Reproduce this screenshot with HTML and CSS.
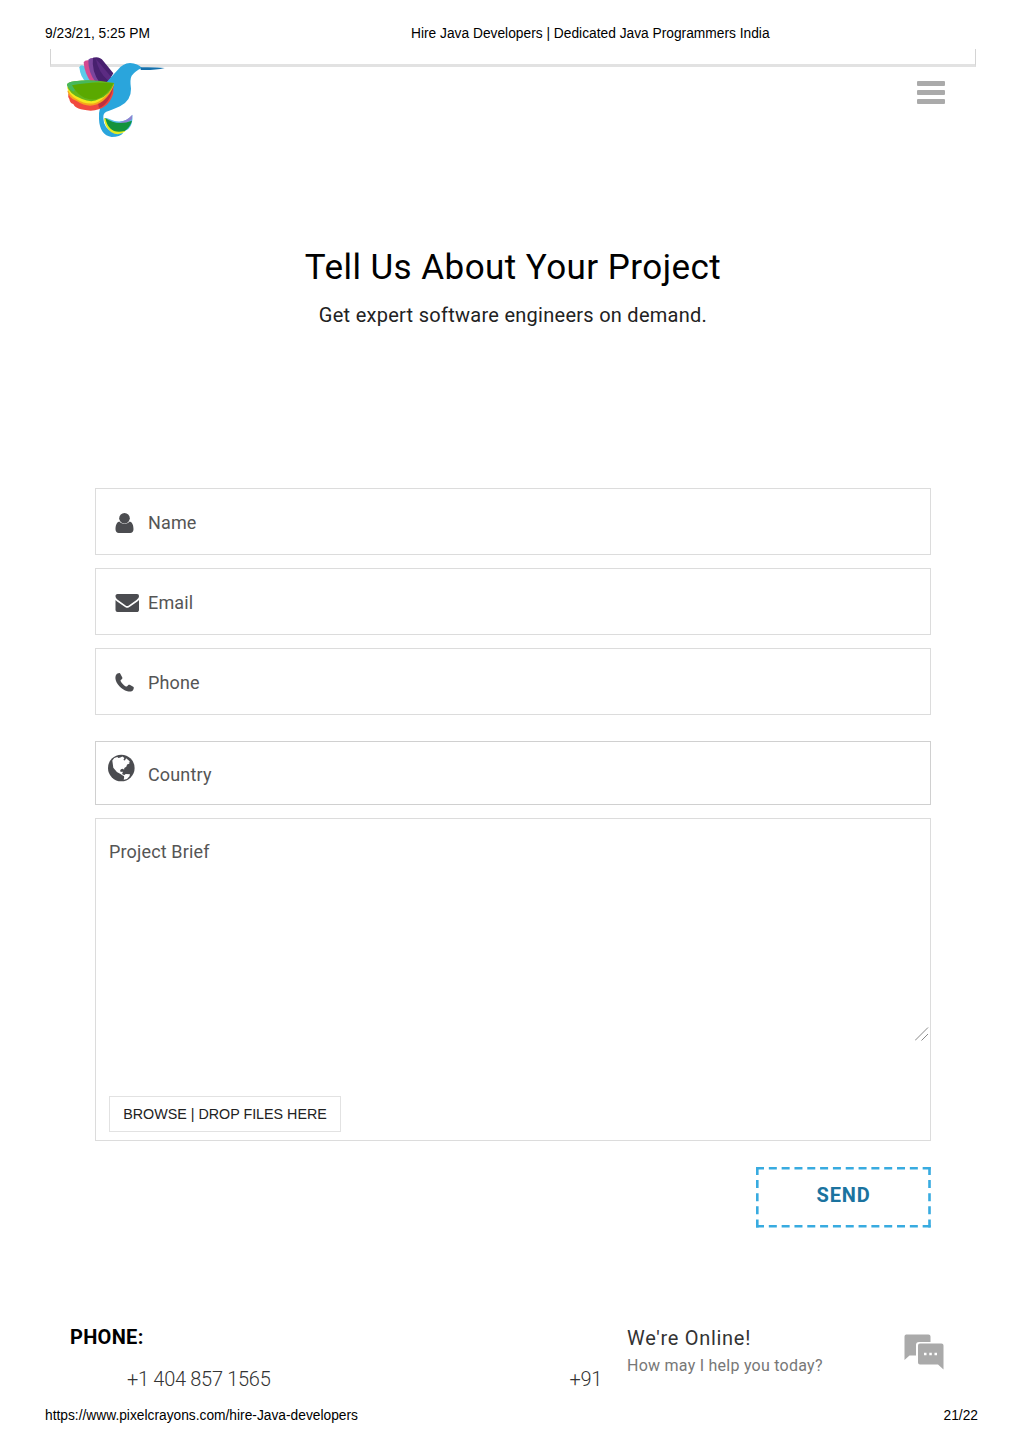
FILE: index.html
```html
<!DOCTYPE html>
<html lang="en">
<head>
    <meta charset="UTF-8">
    <meta name="viewport" content="width=device-width, initial-scale=1.0">
    <title>Hire Java Developers | Dedicated Java Programmers India</title>
    <link rel="stylesheet" href="styles.css">
</head>
<body>
    <div class="print-header">
        <span class="print-date">9/23/21, 5:25 PM</span>
        <span>Hire Java Developers | Dedicated Java Programmers India</span>
    </div>

    <div class="panel-edge"></div>
    <header class="site-header">
        <svg class="logo" width="110" height="92" viewBox="0 0 330 276">
            <path d="M58 52 Q61 42 73 48 L132 98 H80 Q61 83 58 52Z" fill="#5bcbea"/>
            <path d="M71 37 Q76 27 94 33 L142 98 H94 Q73 70 71 37Z" fill="#d44a91"/>
            <path d="M85 29 Q89 23 104 23 L155 75 L142 98 H108 Q84 67 85 29Z" fill="#7a459d"/>
            <path d="M99 23 Q119 18 130 33 L160 70 L143 98 H119 Q94 63 99 23Z" fill="#48206f"/>
            <path d="M108 27 L153 80 L146 93 Q115 68 108 27Z" fill="#5b2b82"/>
            <path d="M137 100 Q156 78 173 60 Q188 40 210 39 Q234 40 246 54 Q225 63 215 77 Q209 88 213 116 Q214 151 180 169 Q155 181 139 185 Q129 189 130 204 Q131 234 158 246 Q176 253 190 248 Q180 261 155 261 Q119 255 117 207 Q116 187 120 174 Z" fill="#2aa5dc"/>
            <path d="M242 52 Q286 51 314 54 Q286 61 242 60Z" fill="#1470ac"/>
            <path d="M25 132 Q23 141 28 147 Q30 160 40 162 Q45 179 92 182 Q145 181 160 130 L160 104Z" fill="#f1493e"/>
            <path d="M117 174 Q153 159 161 104 L145 104 L112 150Z" fill="#bd3040"/>
            <path d="M22 122 Q26 145 50 153 Q91 181 129 153 Q153 132 162 104Z" fill="#f6a51d"/>
            <path d="M21 112 Q28 137 48 146 Q91 174 124 149 Q151 128 162 101Z" fill="#f4e91d"/>
            <path d="M21 104 Q24 96 43 94 Q96 86 163 99 Q148 137 117 147 Q96 160 66 147 Q25 131 21 104Z" fill="#65b51c"/>
            <path d="M21 104 Q24 96 43 94 Q86 88 124 95 Q64 94 40 125 Q23 115 21 104Z" fill="#47b85c"/>
            <path d="M36 106 Q86 94 160 100 Q143 137 108 148 Q62 153 36 106Z" fill="#5aa900"/>
            <path d="M142 205 Q189 228 217 195 Q220 223 205 237 Q179 256 151 242 Q135 227 133 204Z" fill="#52bde9"/>
            <path d="M175 217 Q199 214 217 194 L216 207 Q200 223 175 217Z" fill="#8f83d0"/>
            <path d="M132 204 Q134 232 153 246 Q176 260 196 244 L142 208Z" fill="#e4eb20"/>
            <path d="M136 204 Q171 229 216 212 Q210 232 194 243 Q146 255 136 204Z" fill="#14933d"/>
        </svg>
        <div class="menu-toggle">
            <span></span>
            <span></span>
            <span></span>
        </div>
    </header>

    <main class="contact">
        <h1>Tell Us About Your Project</h1>
        <p class="subtitle">Get expert software engineers on demand.</p>

        <form class="contact-form">
            <label class="field">
                <svg class="icon" width="30" height="24" viewBox="0 0 30 24">
                    <circle cx="9.500" cy="8.300" r="5.300"/>
                    <path d="M4.200 11.500C1.400 12.300.5 15.800.5 19.300c0 2.100 1.400 3.700 3.300 3.700h11.400c1.900 0 3.300-1.600 3.300-3.700 0-3.500-.9-7-3.700-7.800-3 3.100-7.600 3.100-10.600 0z"/>
                </svg>
                <span class="field-name">Name</span>
            </label>
            <label class="field">
                <svg class="icon" width="30" height="24" viewBox="0 -1 30 24">
                    <path d="M2.500 3H22a2 2 0 0 1 2 2.100c0 1.700-1.100 2.900-2.500 3.900l-7.400 5.200c-1 .7-1.400.9-1.900.9s-1-.2-1.900-.9L3 9C1.600 8 .5 6.600.5 5.200.5 4 1.200 3 2.500 3z"/>
                    <path d="M.5 9c.5.6 1 1 1.600 1.400l7.200 5c1.200.9 2 1.300 2.900 1.300s1.800-.4 3-1.300l7.200-5c.6-.4 1.100-.8 1.600-1.400v10c0 1.200-.9 2.100-2.100 2.100H2.600A2.100 2.100 0 0 1 .5 19z"/>
                </svg>
                <span class="field-name">Email</span>
            </label>
            <label class="field">
                <svg class="icon" width="30" height="24" viewBox="0 0 30 24">
                    <path d="M4.300 3.100c.5-.1.700.1 1 .6l2 3.800c.3.600.1 1-.3 1.400-.7.700-1.500 1-1.500 1.700 0 .8 1.300 2.500 2.500 3.600 1.200 1.200 2.800 2.400 3.600 2.400.7 0 1-.8 1.700-1.500.4-.5.8-.6 1.400-.3l3.500 1.900c.5.3.7.5.6 1-.2 1.700-.7 2.700-1.600 3.200-1.400.8-2.900.9-4.800.3-3.300-1-5.500-2.500-8-5C1.900 13.700.9 11.500.5 9c-.3-2 .1-3.600.9-4.600.6-.8 1.700-1.200 2.900-1.300z"/>
                </svg>
                <span class="field-name">Phone</span>
            </label>
            <label class="field field-country">
                <svg class="icon" width="27" height="28" viewBox="0 0 27 28">
                    <circle cx="13.300" cy="14" r="13.300"/>
                    <path fill="#fff" d="M4.300 6.500l2-2.400 3-1 1.100 1 2-.7 2-.8 2 1.500-1 2 1.500.5 1.200-2.300 3 2.500 1 1.500-1.500.2 1 1-2.500 1-.8 2.300-2 1.200-.2 1.700-1.200-1-2 .5-.9 1.700 1 1 1.300-.5.5 1.200-.8 1.500 2 1-.5 1-3-2.200-3.600-2-3.600-4.200zM15.700 21.500l2-1.500 4.300.3-.5 2-2.500 2.600-3.300.8.5-2.700z"/>
                </svg>
                <span class="field-name">Country</span>
            </label>
            <div class="brief">
                <span class="field-name">Project Brief</span>
                <svg class="resize-grip" width="14" height="14" viewBox="0 0 14 14">
                    <path d="M0 13.500L13 .5M6.500 13.500L13 7"/>
                </svg>
                <button type="button" class="browse">BROWSE | DROP FILES HERE</button>
            </div>
            <button type="submit" class="send">
                <svg class="dashes" width="175" height="61" viewBox="0 0 175 61">
                    <path d="M0 1.300H174.600M0 59.200H174.600" stroke-dasharray="8 4.820"/>
                    <path d="M1.300 0V60.500M173.500 0V60.500" stroke-dasharray="8 5.120"/>
                </svg>
                <span>SEND</span>
            </button>
        </form>
    </main>

    <footer class="site-footer">
        <div class="phones">
            <h2>PHONE:</h2>
            <div class="numbers">
                <span class="phone-us">+1 404 857 1565</span>
                <span class="phone-in">+91</span>
            </div>
        </div>
        <div class="chat">
            <div class="chat-text">
                <div class="chat-title">We're Online!</div>
                <div class="chat-hint">How may I help you today?</div>
            </div>
            <svg class="chat-icon" width="40" height="36" viewBox="0 0 40 36">
                <path d="M2 .5h22.500a2 2 0 0 1 2 2V8H15a3 3 0 0 0-3 3v10.500H5.500L.5 26V2.500a2 2 0 0 1 1.500-2z"/>
                <path d="M16 9.500h21.500a2 2 0 0 1 2 2v24l-5.500-5H16a2 2 0 0 1-2-2v-17a2 2 0 0 1 2-2z"/>
                <path class="dots" d="M20 18.700h2.500v2.500H20zM25.300 18.700h2.500v2.500h-2.500zM30.500 18.700H33v2.500h-2.500z"/>
            </svg>
        </div>
    </footer>

    <div class="print-footer">
        <span>https://www.pixelcrayons.com/hire-Java-developers</span>
        <span>21/22</span>
    </div>
</body>
</html>
```
FILE: styles.css
```css
* {
    box-sizing: border-box;
}

body {
    margin: 0;
    height: 1449px;
    background: #fff;
    color: #000;
    font-family: Roboto, sans-serif;
    overflow: hidden;
}

h1, h2, p {
    margin: 0;
    font-weight: 400;
}

/* Print header and footer lines */
.print-header,
.print-footer {
    display: flex;
    font: 13.78px/18px "Liberation Sans", Arial, sans-serif;
}

.print-header {
    padding: 25px 45px 0;
    height: 49px;
}

.print-date {
    width: 366px;
}

.print-footer {
    justify-content: space-between;
    padding: 0 46px 0 45px;
}

/* Header */
.panel-edge {
    height: 18px;
    margin: 0 48px 0 50px;
    border: solid #e2e2e2;
    border-width: 0 1px 3px;
    border-left-color: #d4d4d4;
    border-right-color: #d4d4d4;
}

.site-header {
    display: flex;
    justify-content: space-between;
    height: 177px;
    margin-top: -17px;
    padding: 0 79px 0 60px;
}

.logo {
    position: relative;
}

.menu-toggle {
    display: flex;
    flex-direction: column;
    gap: 4px;
    padding-top: 31px;
}

.menu-toggle span {
    width: 28px;
    height: 5px;
    border-radius: 1px;
    background: #aaa;
}

/* Contact form */
.contact {
    padding: 20px 93px 0 95px;
}

h1 {
    text-align: center;
    font-size: 35px;
    line-height: 42px;
    letter-spacing: 0.45px;
}

.subtitle {
    margin-top: 14px;
    text-align: center;
    font-size: 20px;
    line-height: 24px;
    letter-spacing: 0.27px;
    color: #222;
}

.contact-form {
    display: flex;
    flex-direction: column;
    padding-top: 161px;
}

.field {
    display: flex;
    align-items: center;
    height: 67px;
    margin-bottom: 13px;
    padding-left: 19px;
    border: 1px solid #dcdcdc;
}

.icon {
    fill: #4b4c50;
}

.field-name {
    font-size: 18px;
    line-height: 22px;
    letter-spacing: 0.15px;
    color: #555;
}

.field .field-name {
    margin-left: 3px;
    padding-top: 2px;
}

.field-country {
    height: 64px;
    margin-top: 13px;
    padding-left: 12px;
    border-color: #d0d0d0;
}

.field-country .icon {
    margin-bottom: 11px;
}

.field-country .field-name {
    margin-left: 13px;
    padding-top: 4px;
}

.brief {
    display: flex;
    flex-direction: column;
    align-items: flex-start;
    height: 323px;
    padding: 22px 0 8px 13px;
    border: 1px solid #dcdcdc;
}

.resize-grip {
    align-self: flex-end;
    margin: 164px 1px 55px 0;
    fill: none;
    stroke: #888;
}

.browse {
    width: 232px;
    height: 36px;
    padding: 0;
    border: 1px solid #e2e2e2;
    background: #fff;
    color: #222;
    font: 14.3px "Liberation Sans", Arial, sans-serif;
    white-space: nowrap;
}

.send {
    position: relative;
    align-self: flex-end;
    width: 175px;
    height: 61px;
    margin-top: 26px;
    padding: 0 0 5px;
    border: 0;
    background: #fff;
    color: #1b739f;
    font: 700 20px Roboto, sans-serif;
    letter-spacing: 0.8px;
}

.dashes {
    position: absolute;
    top: 0;
    left: 0;
    fill: none;
    stroke: #38abe0;
    stroke-width: 2.6;
}

/* Footer */
.site-footer {
    display: flex;
    height: 179px;
    padding: 97px 80px 0 70px;
}

.phones {
    width: 557px;
}

.phones h2 {
    font-size: 20px;
    font-weight: 700;
    line-height: 24px;
    letter-spacing: 0.3px;
}

.numbers {
    display: flex;
    padding: 17px 25px 0 57px;
    justify-content: space-between;
    font-size: 20px;
    font-weight: 300;
    line-height: 26px;
    letter-spacing: -0.3px;
    color: #333;
}

.chat {
    display: flex;
    flex: 1;
    justify-content: space-between;
}

.chat-title {
    font-size: 20px;
    line-height: 26px;
    letter-spacing: 0.7px;
    color: #333;
}

.chat-hint {
    margin-top: 4px;
    font-size: 16px;
    line-height: 22px;
    letter-spacing: 0.25px;
    color: #777;
}

.chat-icon {
    margin-top: 9px;
    fill: #aaa;
}

.chat-icon .dots {
    fill: #fff;
}
```
